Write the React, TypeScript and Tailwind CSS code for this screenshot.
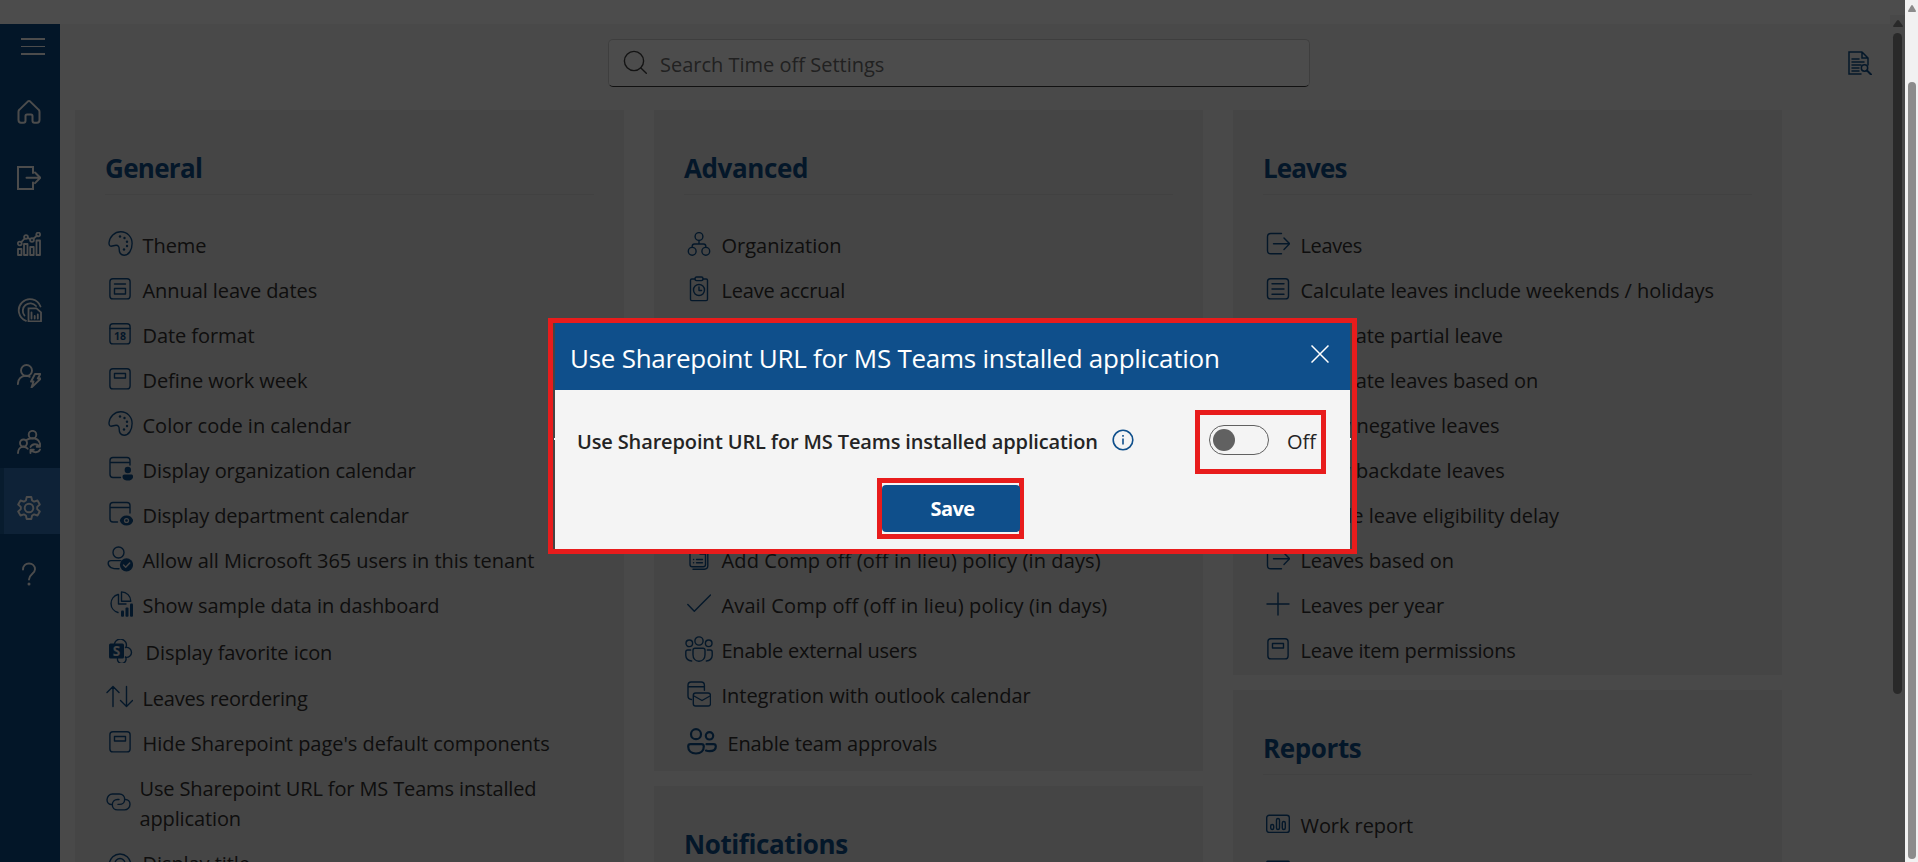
import type { ReactNode } from "react";

type IconProps = { children: ReactNode; className?: string; box?: string };

function Svg({ children, className = "h-6 w-6", box = "0 0 24 24" }: IconProps) {
  return (
    <svg
      viewBox={box}
      className={`shrink-0 ${className}`}
      fill="none"
      stroke="currentColor"
      strokeWidth="1.4"
      strokeLinecap="round"
      strokeLinejoin="round"
    >
      {children}
    </svg>
  );
}

const palette = (
  <Svg className="h-[25px] w-[25px]" box="0 0 25 25">
    <path d="M1 11.8C1.6 5.6 6.6.8 12.8.8c6.400 0 11.300 5 11.300 11.700 0 6.400-3.300 11.700-7.900 11.700-3.500 0-5.100-2.400-5-6 .1-2.500-.9-3.900-3.100-3.900-1.900 0-3.300.9-5 .9-1.400 0-2.200-1.400-2.100-3.400Z" />
    <g fill="currentColor" stroke="none">
      <circle cx="12" cy="5.500" r="1.200" />
      <circle cx="16.500" cy="7" r="1.200" />
      <circle cx="19" cy="10.800" r="1.200" />
      <circle cx="19" cy="15" r="1.200" />
      <circle cx="16" cy="18.500" r="1.200" />
    </g>
  </Svg>
);

const annual = (
  <Svg>
    <rect x="1.900" y="1.700" width="20.200" height="20.200" rx="3" />
    <path d="M6.500 7h11M6.500 11.500h11v5.500h-11z" />
  </Svg>
);

const dateIcon = (
  <Svg>
    <rect x="1.900" y="1.700" width="20.200" height="20.200" rx="3" />
    <path d="M2 6.500h20" />
    <text x="12" y="18" textAnchor="middle" fontSize="10.500" fontWeight="700" fill="currentColor" stroke="none">
      18
    </text>
  </Svg>
);

const week = (
  <Svg>
    <rect x="1.900" y="1.700" width="20.200" height="20.200" rx="3" />
    <path d="M6.500 6.500h11v4.500h-11z" />
  </Svg>
);

const orgCalendar = (
  <Svg className="-mr-px h-[25px] w-[25px]" box="0 0 25 25">
    <path d="M12.500 21.500H5a3 3 0 0 1-3-3V4.500a3 3 0 0 1 3-3h14a3 3 0 0 1 3 3V9M2 6.500h20" />
    <g fill="currentColor" stroke="none">
      <circle cx="19.800" cy="14" r="3.200" />
      <path d="M14.500 20.500c0-1.200.8-2 2-2h6.600c1.200 0 2 .8 2 2 0 2.600-2.300 4-5.300 4s-5.300-1.400-5.300-4Z" />
    </g>
  </Svg>
);

const deptCalendar = (
  <Svg className="-mr-px h-[25px] w-[25px]" box="0 0 25 25">
    <path d="M9.500 21H5a3 3 0 0 1-3-3V4.500a3 3 0 0 1 3-3h14a3 3 0 0 1 3 3V12M2 6.500h20" />
    <path d="M12.500 19.500c1-2.700 3.300-4.300 6-4.300s5 1.600 6 4.300c-1 2.700-3.300 4.300-6 4.300s-5-1.600-6-4.300Z" fill="currentColor" />
    <circle cx="18.500" cy="19.500" r="2.600" fill="#e6e6e6" stroke="none" />
    <circle cx="18.500" cy="19.500" r="1.300" fill="currentColor" stroke="none" />
  </Svg>
);

const userCheck = (
  <Svg className="-ml-px h-[26px] w-[26px]" box="0 0 26 26">
    <circle cx="11.500" cy="6.500" r="5.500" />
    <path d="M12 22.800C5 23 1.200 21 1.200 17.300c0-1.700 1-2.700 2.700-2.700h9.600" />
    <circle cx="19.500" cy="18.800" r="6.600" fill="currentColor" stroke="none" />
    <path d="m16.500 19 2.200 2.200 4-4.300" stroke="#e6e6e6" />
  </Svg>
);

const pieBars = (
  <Svg className="h-[26px] w-6" box="0 0 24 26">
    <path d="M9 3.500A9.300 9.300 0 0 0 9 21.500M9.500 3.500V13H17" />
    <path d="M12.500.9v9.300h9.300A9.300 9.300 0 0 0 12.500.9Z" />
    <g fill="currentColor" stroke="none">
      <rect x="12" y="19.500" width="3" height="6.300" rx="1" />
      <rect x="16.500" y="16.500" width="3" height="9.300" rx="1" />
      <rect x="21" y="12.500" width="3" height="13.300" rx="1" />
    </g>
  </Svg>
);

const favorite = (
  <Svg className="h-6 w-6">
    <path d="M5.500 4.500a6 6 0 0 1 11.700 3.300" />
    <path d="M16.500 8.500a5 5 0 1 1 0 9.800" />
    <path d="M8.500 19.500a4.300 4.300 0 1 0 8-1.500" />
    <rect x="0" y="4.500" width="15" height="15" rx="1.500" fill="currentColor" stroke="none" />
    <text x="7.500" y="17" textAnchor="middle" fontSize="13.500" fontWeight="700" fill="#e6e6e6" stroke="none">
      S
    </text>
  </Svg>
);

const reorder = (
  <Svg className="-mr-0.5 -ml-[2px] h-6 w-[27px]" box="0 0 27 24">
    <path d="M7 21.500V1.500M1 7.500l6-6 6 6M20.500 1.500v20M14.500 15.500l6 6 6-6" />
  </Svg>
);

const link = (
  <Svg className="h-[18px] w-[25px]" box="0 0 25 18">
    <path d="M5.500 11.500C3 11.500 1 9.500 1 6.800 1 3.600 3.500 1 6.500 1h6.800c3.200 0 5.400 2.300 5.400 5.200 0 3-2.200 5.200-5.200 5.200H12" />
    <path d="M19.500 6.500c2.500 0 4.500 2 4.500 4.700 0 3.200-2.500 5.700-5.500 5.700h-6.800c-3.200 0-5.400-2.300-5.400-5.200 0-3 2.200-5.200 5.200-5.200H13" />
  </Svg>
);

const eye = (
  <Svg>
    <path d="M1 14.500C2 8 6.500 4 12 4s10 4 11 10.500" />
    <circle cx="12" cy="13.500" r="5" />
  </Svg>
);

const org = (
  <Svg>
    <circle cx="12" cy="4.500" r="3.900" />
    <circle cx="5.200" cy="19.300" r="3.900" />
    <circle cx="18.800" cy="19.300" r="3.900" />
    <path d="M12 8.500V12M5.200 15.300v-1c0-1.500.8-2.300 2.300-2.300h9c1.500 0 2.300.8 2.300 2.300v1" />
  </Svg>
);

const accrual = (
  <Svg className="h-[26px] w-6" box="0 0 24 26">
    <path d="M8 3H4.800c-.8 0-1.300.5-1.300 1.300v19c0 .8.500 1.300 1.300 1.300h14.400c.8 0 1.300-.5 1.300-1.300v-19c0-.8-.5-1.300-1.300-1.300H16" />
    <rect x="8" y="1" width="8" height="3.600" rx="1.500" />
    <circle cx="12" cy="14" r="5.500" />
    <path d="M12 11v3.500h2.600" />
  </Svg>
);

const policy = (
  <Svg className="h-6 w-6">
    <path d="M5.500 1.500h8l5 5v11c0 1.500-.8 2.300-2.300 2.300H5.300c-1.500 0-2.300-.8-2.300-2.300v-14c0-1.200.8-2 2.500-2ZM13 2v5h5.500" />
    <path d="M20.800 6.500v12.300c0 2.200-1.200 3.400-3.400 3.400H6" />
    <path d="M9.500 12.500h6M9.500 15.800h6M6.500 12.500h.2M6.500 15.800h.2" />
  </Svg>
);

const check = (
  <Svg>
    <path d="m.8 12.500 6.500 6.800L23.500 3" />
  </Svg>
);

const group = (
  <Svg className="-mx-0.5 h-[26px] w-7" box="0 0 28 26">
    <circle cx="14" cy="5" r="4.100" />
    <circle cx="4.300" cy="7.300" r="3.300" />
    <circle cx="23.700" cy="7.300" r="3.300" />
    <path d="M10 12.200h8c1.300 0 2 .7 2 2v4.500c0 3.800-2.500 6.500-6 6.500s-6-2.700-6-6.500v-4.500c0-1.300.7-2 2-2Z" />
    <path d="M5.700 14H2.800c-1.200 0-2 .8-2 2v3.500c0 3 2.500 5.500 5.900 5.500M22.300 14h2.900c1.200 0 2 .8 2 2v3.500c0 3-2.500 5.500-5.900 5.500" />
  </Svg>
);

const outlook = (
  <Svg className="h-[26px] w-6" box="0 0 24 26">
    <path d="M4.500 18.500c-2-.2-3.500-1.200-3.500-3.500V4.200C1 2.300 2.300 1 4.200 1h10c1.900 0 3.200 1.300 3.200 3.200v5M1 5.800h16.500" />
    <rect x="6.300" y="12" width="17.200" height="13" rx="2.300" />
    <path d="m7 15 8 4.500 8-4.500" />
  </Svg>
);

const team = (
  <Svg className="h-[27px] w-[30px]" box="0 0 30 27">
    <g strokeWidth="2.200">
      <circle cx="9" cy="6.200" r="5" />
      <circle cx="22.500" cy="7.800" r="3.700" />
      <path d="M3.500 16.200h11c1.500 0 2.300.8 2.300 2.300 0 4-2.800 7-7.800 7s-7.800-3-7.800-7c0-1.500.8-2.300 2.300-2.300Z" />
      <path d="M19.500 16.200h7c1.500 0 2.300.8 2.300 2.300 0 3-2.500 4.700-6.300 4.700-1.300 0-2.500-.2-3.500-.6" />
    </g>
  </Svg>
);

const leave = (
  <Svg>
    <path d="M15.500 1.500H4.800c-2 0-3.300 1.300-3.300 3.300v13.700c0 2 1.300 3.300 3.300 3.300h10.700M7.500 11.700h16M18 6l5.600 5.700L18 17.400" />
  </Svg>
);

const list = (
  <Svg>
    <rect x="1.500" y="1.700" width="21" height="20.200" rx="3" />
    <path d="M6 6.800h12M6 12h12M6 17.200h12" />
  </Svg>
);

const partial = (
  <Svg className="h-6 w-6">
    <circle cx="12" cy="12" r="10" />
    <path d="M12 .2v12h6" />
  </Svg>
);

const plus = (
  <Svg>
    <path d="M12 1v22M1 12h22" />
  </Svg>
);

const report = (
  <Svg>
    <rect x="0.700" y="3.200" width="22.600" height="17.200" rx="2.500" />
    <rect x="4.700" y="12.500" width="3" height="5" rx="1.500" />
    <rect x="10.500" y="6.500" width="3" height="11" rx="1.500" />
    <rect x="16.300" y="9.500" width="3" height="8" rx="1.500" />
  </Svg>
);

const timeOff = (
  <Svg>
    <path d="M1.600 5h20.800v17H1.600zM1.600 6.300h20.800" strokeWidth="3" />
  </Svg>
);

type Item = { icon: ReactNode; label: string; row?: string };

const ROW = "h-[45px] gap-[10.5px] pl-[3px]";

const general: Item[] = [
  { icon: palette, label: "Theme", row: "h-[45px] gap-[9.5px] pl-[3px]" },
  { icon: annual, label: "Annual leave dates" },
  { icon: dateIcon, label: "Date format" },
  { icon: week, label: "Define work week" },
  { icon: palette, label: "Color code in calendar", row: "h-[45px] gap-[9.5px] pl-[3px] tracking-[0px]" },
  { icon: orgCalendar, label: "Display organization calendar" },
  { icon: deptCalendar, label: "Display department calendar", row: "h-[45px] gap-[10.5px] pl-[3px] tracking-[-0.13px]" },
  {
    icon: userCheck,
    label: "Allow all Microsoft 365 users in this tenant",
    row: "h-[45px] gap-[9.500px] pl-[3px] tracking-[-0.04px]",
  },
  { icon: pieBars, label: "Show sample data in dashboard", row: "h-[45px] gap-[9.5px] pl-1" },
  { icon: favorite, label: "Display favorite icon", row: "h-[49px] gap-[12.5px] pl-1" },
  { icon: reorder, label: "Leaves reordering", row: "h-[43px] gap-[11.5px] pl-[3px] tracking-[-0.18px]" },
  {
    icon: week,
    label: "Hide Sharepoint page's default components",
    row: "h-[47px] gap-[10.5px] pl-[3px] tracking-[-0.03px]",
  },
  {
    icon: link,
    label: "Use Sharepoint URL for MS Teams installed application",
    row: "h-[73px] gap-[8.5px] pl-px tracking-[-0.13px]",
  },
  { icon: eye, label: "Display title", row: "h-[48px] gap-[10.5px] pl-[3px]" },
];

const advancedTop: Item[] = [
  { icon: org, label: "Organization", row: "h-[45px] gap-[10.5px] pl-[3px] tracking-[0px]" },
  { icon: accrual, label: "Leave accrual", row: "h-[45px] gap-[10.5px] pl-[3px] tracking-[-0.2px]" },
];

const advancedBottom: Item[] = [
  {
    icon: policy,
    label: "Add Comp off (off in lieu) policy (in days)",
    row: "h-[45px] gap-[10.5px] pl-[3px] tracking-[0.13px]",
  },
  {
    icon: check,
    label: "Avail Comp off (off in lieu) policy (in days)",
    row: "h-[45px] gap-[10.5px] pl-[3px] tracking-[0.12px]",
  },
  { icon: group, label: "Enable external users", row: "h-[45px] gap-[10.5px] pl-[3px] tracking-[-0.25px]" },
  { icon: outlook, label: "Integration with outlook calendar", row: "h-[45px] gap-[10.5px] pl-[3px] tracking-[-0.03px]" },
  { icon: team, label: "Enable team approvals", row: "h-[51px] gap-[10.5px] pl-[3px] tracking-[-0.15px]" },
];

const leaves: Item[] = [
  { icon: leave, label: "Leaves", row: "h-[45px] gap-[10.5px] pl-[3px] tracking-[-0.35px]" },
  { icon: list, label: "Calculate leaves include weekends / holidays", row: "h-[45px] gap-[10.5px] pl-[3px] tracking-[-0.04px]" },
  { icon: partial, label: "Calculate partial leave" },
  { icon: list, label: "Calculate leaves based on" },
  { icon: check, label: "Allow negative leaves", row: "h-[45px] gap-[10.5px] pl-[3px] tracking-[0.07px]" },
  { icon: check, label: "Allow backdate leaves", row: "h-[45px] gap-[10.5px] pl-[3px] tracking-[0.02px]" },
  { icon: annual, label: "Enable leave eligibility delay", row: "h-[45px] gap-[10.5px] pl-[3px] tracking-[0px]" },
  { icon: leave, label: "Leaves based on" },
  { icon: plus, label: "Leaves per year", row: "h-[45px] gap-[10.5px] pl-[3px] tracking-[-0.18px]" },
  { icon: week, label: "Leave item permissions", row: "h-[45px] gap-[10.5px] pl-[3px] tracking-[-0.2px]" },
];

const reports: Item[] = [
  { icon: report, label: "Work report" },
  { icon: timeOff, label: "Individual time off" },
];

function Rows({ items }: { items: Item[] }) {
  return (
    <ul>
      {items.map((item) => (
        <li key={item.label} className={`flex items-center ${item.row ?? ROW}`}>
          <span className="mb-0.5 flex shrink-0 items-center text-[#0f4f8b]">{item.icon}</span>
          <span className="mt-0.5 max-w-[440px] leading-[30px] text-[#323130]">{item.label}</span>
        </li>
      ))}
    </ul>
  );
}

function Card({ title, height = "", children }: { title: string; height?: string; children?: ReactNode }) {
  return (
    <section className={`w-[549px] shrink-0 bg-[#e6e6e6] px-[30px] pt-11 ${height}`}>
      <h2
        className={`mb-[27px] border-b border-[#dadada] pb-3 text-[26px] leading-7 font-bold text-[#0f4f8b] ${
          title === "Leaves" ? "tracking-[-0.9px]" : title === "General" ? "tracking-[-0.7px]" : "tracking-[-0.4px]"
        }`}
      >
        {title}
      </h2>
      {children}
    </section>
  );
}

const navIcons: { id: string; icon: ReactNode }[] = [
  {
    id: "home",
    icon: (
      <Svg>
        <path
          strokeWidth="2"
          d="M10.700 1.600a2 2 0 0 1 2.600 0l8.200 8c.7.6 1 1.400 1 2.200v8.200c0 1.700-1 2.700-2.500 2.700h-2.500c-1.300 0-2-.7-2-2V16c0-.9-.6-1.500-1.500-1.500h-4c-.9 0-1.500.6-1.500 1.500v4.700c0 1.300-.7 2-2 2H4c-1.500 0-2.500-1-2.500-2.700v-8.200c0-.8.300-1.600 1-2.200Z"
        />
      </Svg>
    ),
  },
  {
    id: "exit",
    icon: (
      <Svg>
        <path strokeWidth="2" strokeLinejoin="miter" d="M16 7V1H1v22h15v-6.500M9.500 11.800h13.500M18 6.500l5.300 5.300-5.300 5.300" />
      </Svg>
    ),
  },
  {
    id: "chart",
    icon: (
      <Svg>
        <g strokeWidth="1.800">
          <path d="M1 17h3.500v6H1zM7 12h3.500v11H7zM13.200 15h3.500v8h-3.500zM19.500 8.500H23V23h-3.500z" />
          <circle cx="2.800" cy="11.500" r="1.900" />
          <circle cx="9" cy="5" r="1.900" />
          <circle cx="15" cy="8" r="1.900" />
          <circle cx="21.200" cy="2.500" r="1.900" />
          <path d="m4.200 10.200 3.500-3.700M10.700 5.900l2.700 1.300M16.300 6.700l3.600-2.900" />
        </g>
      </Svg>
    ),
  },
  {
    id: "dashboard",
    icon: (
      <Svg className="h-6 w-[25px]" box="0 0 25 24">
        <g strokeWidth="1.800">
          <path d="M9 22.800A11.200 11.200 0 1 1 23.500 8.500" />
          <path d="M7.500 17.500a7.300 7.300 0 1 1 11.500-9.500" />
          <path strokeLinejoin="miter" d="M11.500 10.300h8l4.500 4v9H11.500zM14.500 14.500v6M17.700 18v2.500M20.800 16.500v4" />
        </g>
      </Svg>
    ),
  },
  {
    id: "user-actions",
    icon: (
      <Svg>
        <g strokeWidth="1.900">
          <circle cx="9.500" cy="6.500" r="5.500" />
          <path d="M.9 20c0-4.500 3-8.200 8-8.200 1.500 0 2.700.3 3.700.9M18 10h5.300l-2.500 4.500h3.200l-9.500 9 2-6h-2.500z" />
        </g>
      </Svg>
    ),
  },
  {
    id: "team-sync",
    icon: (
      <Svg>
        <g strokeWidth="1.900">
          <circle cx="15.500" cy="4.700" r="3.800" />
          <circle cx="6.500" cy="13" r="3.500" />
          <path d="M1 23c0-3.500 2-6.300 5.500-6.300 2 0 3.300.8 4.200 2M9.500 10c1.500-1.300 3.500-1.800 6-1.800 3.500 0 6 1.500 7 4.300M13.500 17c1.500-3.500 6.500-3.700 8.700-.7M23 13.500v3.300h-3.300M23 19.500c-1.500 3.500-6.500 3.700-8.700.7M13.500 23v-3.300h3.300" />
        </g>
      </Svg>
    ),
  },
  {
    id: "settings",
    icon: (
      <Svg>
        <g strokeWidth="1.900">
          <circle cx="12" cy="12" r="4.300" />
          <path d="M9.700 1h4.600l.8 3.500 2 1.100 3.400-1.100 2.300 4-2.600 2.400v2.200l2.600 2.400-2.300 4-3.400-1.100-2 1.100-.8 3.500H9.700l-.8-3.500-2-1.100-3.400 1.100-2.300-4 2.600-2.400v-2.200L1.200 8.500l2.300-4 3.400 1.100 2-1.100Z" />
        </g>
      </Svg>
    ),
  },
  {
    id: "help",
    icon: (
      <Svg>
        <path strokeWidth="1.900" d="M6 7.500C6 4 8.500 1.500 12 1.500s6 2.300 6 5.700c0 4.800-6 5-6 10.300" />
        <circle cx="12" cy="22" r="1.500" fill="currentColor" stroke="none" />
      </Svg>
    ),
  },
];

function Sidebar() {
  return (
    <nav className="w-[60px] shrink-0 bg-[#0b4a85] text-white">
      <div className="flex h-12 flex-col gap-[6px] pt-[14px] pl-[21px]">
        <span className="h-[1.500px] w-6 bg-white" />
        <span className="h-[1.500px] w-6 bg-white" />
        <span className="h-[1.500px] w-6 bg-white" />
      </div>
      {navIcons.map(({ id, icon }) => (
        <div
          key={id}
          className={`flex h-[66px] items-end border-l-4 pb-[14.500px] pl-[13px] ${
            id === "settings" ? "border-[#1c5f9c] bg-[#2f73b8]" : "border-transparent"
          }`}
        >
          {icon}
        </div>
      ))}
    </nav>
  );
}

function Dialog() {
  return (
    <div className="absolute top-[318px] left-[548px] h-[236px] w-[809px] border-[5px] border-[#e81c1c]">
      <div className="ml-[2px] flex h-[226px] w-[795px] flex-col bg-[#f4f4f4]">
        <header className="flex h-[67px] shrink-0 items-start justify-between bg-[#0f4f8b] pr-[21px] pl-[15px] text-white">
          <h1 className="mt-[19px] text-[26px] leading-8 whitespace-nowrap tracking-[-0.26px]">
            Use Sharepoint URL for MS Teams installed application
          </h1>
          <svg viewBox="0 0 18 18" className="mt-[22px] h-[18px] w-[18px]" stroke="currentColor" strokeWidth="1.500">
            <path d="M.5.5l17 17M17.500.5l-17 17" />
          </svg>
        </header>
        <div className="flex h-[84px] shrink-0 items-start pt-5 pl-[22px]">
          <span className="mt-4 w-[519px] shrink-0 leading-8 font-semibold whitespace-nowrap tracking-[-0.14px] text-[#242424]">
            Use Sharepoint URL for MS Teams installed application
          </span>
          <svg
            viewBox="0 0 22 22"
            className="mt-[19px] ml-[16px] h-[22px] w-[22px] shrink-0"
            fill="none"
            stroke="#0f4f8b"
            strokeWidth="1.600"
          >
            <circle cx="11" cy="11" r="9.800" />
            <path d="M11 9.500v6M11 6v1.700" />
          </svg>
          <div className="ml-[61px] flex h-16 w-[131px] shrink-0 items-center border-[5px] border-[#e81c1c] pl-[9px]">
            <span className="mb-1 flex h-[30px] w-[60px] items-center rounded-full border border-[#616161] pl-[3px]">
              <span className="h-[22px] w-[22px] rounded-full bg-[#616161]" />
            </span>
            <span className="mb-px ml-[18px] text-[#242424]">Off</span>
          </div>
        </div>
        <div className="mt-[4px] ml-[322px] flex h-[61px] w-[147px] shrink-0 items-center border-[5px] border-[#e81c1c]">
          <span className="-mr-2 flex h-[47px] w-[138px] shrink-0 items-center justify-center rounded-[4px] bg-[#0f4f8b] pt-px pl-[3px] font-bold tracking-[-0.55px] text-white">
            Save
          </span>
        </div>
      </div>
      <span className="absolute top-[115px] left-[1px] h-[2px] w-px bg-white" />
      <span className="absolute top-[115px] right-[1px] h-[2px] w-px bg-white" />
    </div>
  );
}

export default function App() {
  return (
    <div className="flex h-screen w-full overflow-hidden font-['Open_Sans','Noto_Sans',sans-serif] text-[20px] tracking-[-0.07px]">
      <main className="relative flex min-w-0 flex-1 overflow-hidden bg-white">
        <div className="flex min-w-0 flex-1 flex-col">
          <div className="h-6 shrink-0 bg-white" />
          <div className="flex min-h-0 flex-1">
            <Sidebar />
            <div className="flex min-w-0 flex-1 flex-col bg-[#f4f4f4]">
              <div className="flex h-[86px] shrink-0 items-start pt-[15px]">
                <div className="ml-[548px] flex h-12 w-[702px] items-center rounded-[5px] border border-[#d1d1d1] border-b-[#3a3a3a] bg-white pl-[14px]">
                  <Svg className="mb-[3px] h-6 w-6">
                    <g stroke="#424242">
                      <circle cx="11" cy="11" r="9.600" />
                      <path d="m17.900 17.900 5.400 5.400" />
                    </g>
                  </Svg>
                  <span className="mt-1 ml-[13px] tracking-[0px] text-[#707070]">Search Time off Settings</span>
                </div>
                <Svg className="mt-3 ml-[538px] h-6 w-6 text-[#0f4f8b]">
                  <g strokeLinejoin="miter" strokeWidth="1.500">
                    <path d="M13 23H1V1h13l6 6v7M14 1v6h6M4 8h7M4 11h12M4 14h9M4 17h7M4 20h7" />
                    <circle cx="16.500" cy="17" r="3.200" />
                    <path d="m19 19.500 4 4" strokeWidth="2" />
                  </g>
                </Svg>
              </div>
              <div className="flex min-h-0 flex-1 gap-[30px] overflow-hidden pl-[15px]">
                <Card title="General" height="h-[860px]">
                  <Rows items={general} />
                </Card>
                <div className="flex flex-col gap-[15px]">
                  <Card title="Advanced" height="h-[661px]">
                    <Rows items={advancedTop} />
                    <div className="h-[225px]" />
                    <Rows items={advancedBottom} />
                  </Card>
                  <Card title="Notifications" height="h-[300px]" />
                </div>
                <div className="flex flex-col gap-[15px]">
                  <Card title="Leaves" height="h-[565px]">
                    <Rows items={leaves} />
                  </Card>
                  <Card title="Reports" height="h-[300px]">
                    <Rows items={reports} />
                  </Card>
                </div>
              </div>
            </div>
          </div>
        </div>
        <div className="mt-[15px] flex w-[15px] shrink-0 flex-col items-center bg-[#f0f0f0] pt-[5px]">
          <svg viewBox="0 0 10 7" className="h-[7px] w-[10px] shrink-0" fill="#8b8b8b">
            <path d="M4 .5Q5-.5 6 .5l4 5.500q0 1-1 1H1q-1 0-1-1Z" />
          </svg>
          <span className="mt-[6px] h-[661px] w-[9px] shrink-0 rounded-full bg-[#8b8b8b]" />
        </div>
        <div className="absolute inset-0 bg-black/70" />
        <Dialog />
      </main>
      <aside className="flex w-[13px] shrink-0 flex-col items-center bg-[#f1f1f1] pt-[5px]">
        <svg viewBox="0 0 10 7" className="h-[7px] w-2 shrink-0" preserveAspectRatio="none" fill="#8b8b8b">
          <path d="M4 .5Q5-.5 6 .5l4 5.500q0 1-1 1H1q-1 0-1-1Z" />
        </svg>
        <span className="mt-[70px] h-[777px] w-2 shrink-0 rounded-full bg-[#8b8b8b]" />
      </aside>
    </div>
  );
}
